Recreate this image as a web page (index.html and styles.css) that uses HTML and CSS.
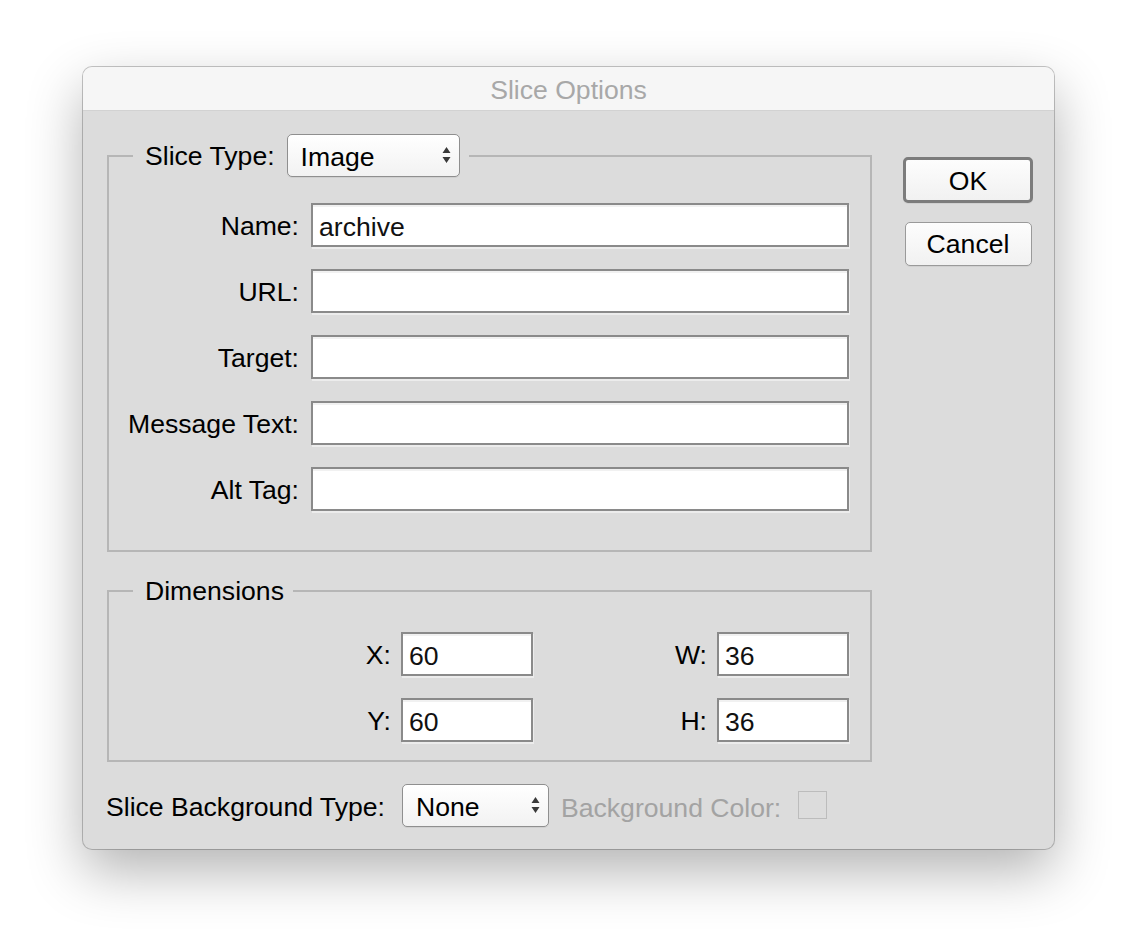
FILE: index.html
```html
<!DOCTYPE html>
<html>
<head>
<meta charset="utf-8">
<link rel="stylesheet" href="styles.css">
</head>
<body>
<div class="window">
  <div class="titlebar">Slice Options</div>
  <div class="content">
    <div class="main">
      <div class="left">
        <fieldset class="group slice">
          <legend class="legend">
            <span class="legend-text">Slice Type:</span>
            <span class="select select-type">
              <span class="select-value">Image</span>
              <svg class="arrows" width="9" height="16" viewBox="0 0 9 16"><path d="M4.5 0 L8.5 6 L0.5 6 Z M0.5 10 L8.5 10 L4.5 16 Z" fill="#3a3a3a"/></svg>
            </span>
          </legend>
          <div class="form-grid">
            <label class="lbl">Name:</label><div class="field">archive</div>
            <label class="lbl">URL:</label><div class="field"></div>
            <label class="lbl">Target:</label><div class="field"></div>
            <label class="lbl">Message Text:</label><div class="field"></div>
            <label class="lbl">Alt Tag:</label><div class="field"></div>
          </div>
        </fieldset>
        <fieldset class="group dims">
          <legend class="legend"><span class="legend-text">Dimensions</span></legend>
          <div class="dim-grid">
            <label class="lbl">X:</label><div class="field">60</div>
            <label class="lbl">W:</label><div class="field">36</div>
            <label class="lbl">Y:</label><div class="field">60</div>
            <label class="lbl">H:</label><div class="field">36</div>
          </div>
        </fieldset>
      </div>
      <div class="buttons">
        <div class="btn btn-default">OK</div>
        <div class="btn">Cancel</div>
      </div>
    </div>
    <div class="bottom">
      <span class="bottom-label">Slice Background Type:</span>
      <span class="select select-bg">
        <span class="select-value">None</span>
        <svg class="arrows" width="9" height="16" viewBox="0 0 9 16"><path d="M4.5 0 L8.5 6 L0.5 6 Z M0.5 10 L8.5 10 L4.5 16 Z" fill="#3a3a3a"/></svg>
      </span>
      <span class="disabled-label">Background Color:</span>
      <span class="swatch"></span>
    </div>
  </div>
</div>
</body>
</html>
```

FILE: styles.css
```css
html, body {
  margin: 0;
  padding: 0;
  background: #ffffff;
}
body {
  width: 1138px;
  height: 950px;
  padding: 67px 0 0 83px;
  box-sizing: border-box;
  font-family: "Liberation Sans", Arial, sans-serif;
  font-size: 26.6px;
  color: #000;
}
.window {
  width: 971px;
  background: #dcdcdc;
  border-radius: 9px;
  box-shadow: 0 0 0 1px rgba(0, 0, 0, 0.22), 0 22px 55px rgba(0, 0, 0, 0.3);
  overflow: hidden;
}
.titlebar {
  height: 43px;
  line-height: 46px;
  background: #f6f6f6;
  border-bottom: 1px solid #d2d2d2;
  text-align: center;
  color: #a8a8a8;
}
.content {
  padding: 23px 20px 22px 24px;
}
.main {
  display: flex;
  gap: 31px;
}
.left {
  width: 765px;
  display: flex;
  flex-direction: column;
  gap: 24px;
}
.group {
  margin: 0;
  border: 2px solid #b6b6b6;
  box-sizing: border-box;
  min-width: 0;
}
.slice {
  padding: 26px 21px 39px 17px;
}
.dims {
  padding: 26px 21px 18px 17px;
}
.legend {
  margin-left: 7px;
  padding: 0 9px 0 12px;
  display: flex;
  align-items: center;
  gap: 12px;
  line-height: 30px;
}
.select {
  position: relative;
  display: flex;
  align-items: center;
  box-sizing: border-box;
  border: 1.5px solid #8f8f8f;
  border-radius: 5px;
  background: linear-gradient(#ffffff, #f2f2f2);
  box-shadow: 0 1px 0 rgba(0,0,0,0.06);
}
.select-type {
  width: 173px;
  height: 43px;
  padding-left: 13px;
}
.select-bg {
  width: 147px;
  height: 43px;
  padding-left: 13px;
}
.select-value {
  line-height: 30px;
  margin-top: 2px;
}
.arrows {
  position: absolute;
  right: 8px;
  top: 12px;
}
.form-grid {
  display: grid;
  grid-template-columns: 173px 538px;
  column-gap: 12px;
  row-gap: 22px;
  align-items: center;
}
.dim-grid {
  display: grid;
  grid-template-columns: 1fr 132px 164px 132px;
  column-gap: 10px;
  row-gap: 22px;
  align-items: center;
}
.lbl {
  text-align: right;
  line-height: 30px;
  margin-top: 2px;
}
.field {
  height: 44px;
  box-sizing: border-box;
  background: #ffffff;
  border: 2px solid #8a8a8a;
  box-shadow: inset 0 2px 0 #f1f1f1, 1px 2px 0 #ececec;
  padding: 0 6px;
  line-height: 44px;
  color: #111;
}
.buttons {
  width: 130px;
  margin-top: 23px;
  display: flex;
  flex-direction: column;
  align-items: center;
  gap: 19px;
}
.btn {
  width: 127px;
  height: 44px;
  box-sizing: border-box;
  border: 1.5px solid #9a9a9a;
  border-radius: 5px;
  background: linear-gradient(#fdfdfd, #f1f1f1);
  text-align: center;
  line-height: 43px;
  box-shadow: 0 1px 0 rgba(0,0,0,0.05);
}
.btn-default {
  width: 130px;
  height: 46px;
  border: 3px solid #7c7c7c;
  line-height: 42px;
}
.bottom {
  margin-top: 22px;
  display: flex;
  align-items: center;
  height: 43px;
}
.bottom-label {
  width: 283px;
  margin-left: -1px;
  margin-right: 13px;
  line-height: 30px;
  margin-top: 2px;
}
.disabled-label {
  margin-left: 12px;
  color: #a3a3a3;
  line-height: 30px;
  margin-top: 5px;
}
.swatch {
  width: 29px;
  height: 28px;
  box-sizing: border-box;
  border: 1.5px solid #bcbcbc;
  margin-left: 17px;
  margin-top: -2px;
}
```
